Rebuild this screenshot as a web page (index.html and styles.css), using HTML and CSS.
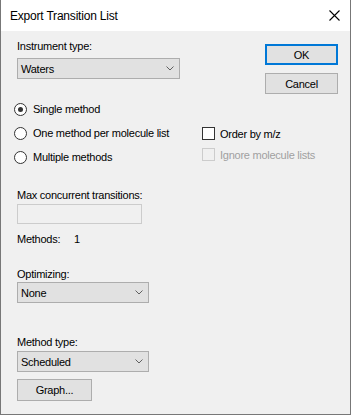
FILE: index.html
```html
<!DOCTYPE html>
<html lang="en">
<head>
    <meta charset="UTF-8">
    <meta name="viewport" content="width=device-width, initial-scale=1.0">
    <title>Export Transition List</title>
    <link rel="stylesheet" href="styles.css">
</head>
<body>
    <div class="window">
        <div class="titlebar">
            <span class="title">Export Transition List</span>
            <svg class="close" width="11" height="11" viewBox="0 0 11 11">
                <path d="M0.5 0.5 L10.5 10.5 M10.5 0.5 L0.5 10.5" stroke="#000" stroke-width="1.1" fill="none"/>
            </svg>
        </div>
        <div class="content">
            <div class="top-row">
                <div class="field">
                    <div class="label">Instrument type:</div>
                    <div class="combo combo-wide">
                        <span>Waters</span>
                        <svg class="chevron" width="8" height="5" viewBox="0 0 8 5"><path d="M0.5 0.5 L4 4 L7.5 0.5" stroke="#606060" fill="none"/></svg>
                    </div>
                </div>
                <div class="dialog-buttons">
                    <div class="button default">OK</div>
                    <div class="button">Cancel</div>
                </div>
            </div>

            <div class="choice-row">
                <div class="radio-list">
                    <div class="radio-item"><span class="radio checked"></span>Single method</div>
                    <div class="radio-item"><span class="radio"></span>One method per molecule list</div>
                    <div class="radio-item"><span class="radio"></span>Multiple methods</div>
                </div>
                <div class="check-list">
                    <div class="check-item"><span class="checkbox"></span>Order by m/z</div>
                    <div class="check-item disabled"><span class="checkbox"></span>Ignore molecule lists</div>
                </div>
            </div>

            <div class="label max-label">Max concurrent transitions:</div>
            <div class="textbox"></div>
            <div class="methods"><span class="methods-name">Methods:</span>1</div>

            <div class="label optimize-label">Optimizing:</div>
            <div class="combo combo-narrow">
                <span>None</span>
                <svg class="chevron" width="8" height="5" viewBox="0 0 8 5"><path d="M0.5 0.5 L4 4 L7.5 0.5" stroke="#606060" fill="none"/></svg>
            </div>

            <div class="label method-label">Method type:</div>
            <div class="combo combo-narrow">
                <span>Scheduled</span>
                <svg class="chevron" width="8" height="5" viewBox="0 0 8 5"><path d="M0.5 0.5 L4 4 L7.5 0.5" stroke="#606060" fill="none"/></svg>
            </div>
            <div class="button graph">Graph...</div>
        </div>
    </div>
</body>
</html>
```

FILE: styles.css
```css
body {
    margin: 0;
    font-family: "Liberation Sans", Arial, sans-serif;
    font-size: 11px;
    letter-spacing: -0.25px;
    color: #000;
    background: #f0f0f0;
}

.window {
    width: 351px;
    height: 415px;
    box-sizing: border-box;
    border: 1px solid #777;
    border-top: none;
    background: #f0f0f0;
    overflow: hidden;
}

.titlebar {
    height: 31px;
    background: #fff;
    display: flex;
    align-items: center;
    padding: 0 9px 0 9px;
}

.title {
    font-size: 12px;
    letter-spacing: -0.2px;
    flex: 1;
}

.close {
    margin-right: 1px;
}

.content {
    padding: 9px 12px 0 16px;
}

.label {
    line-height: 13px;
}

.top-row {
    display: flex;
}

.field {
    flex: 1;
}

.combo {
    margin-top: 5px;
    height: 21px;
    box-sizing: border-box;
    border: 1px solid #adadad;
    background: #e1e1e1;
    display: flex;
    align-items: center;
    justify-content: space-between;
    padding: 0 5px 0 3px;
}

.combo-wide {
    width: 163px;
}

.combo-narrow {
    width: 132px;
}

.dialog-buttons {
    margin-top: 4px;
    display: flex;
    flex-direction: column;
    gap: 8px;
}

.button {
    width: 73px;
    height: 21px;
    box-sizing: border-box;
    border: 1px solid #adadad;
    background: #e1e1e1;
    display: flex;
    align-items: center;
    justify-content: center;
}

.button.default {
    border: 2px solid #0078d7;
}

.choice-row {
    display: flex;
    margin-top: 3px;
    margin-left: -3px;
}

.radio-list {
    width: 188px;
}

.radio-item {
    height: 24px;
    display: flex;
    align-items: center;
}

.radio {
    width: 13px;
    height: 13px;
    box-sizing: border-box;
    border: 1px solid #333;
    border-radius: 50%;
    background: #fff;
    margin-right: 6px;
    display: flex;
    align-items: center;
    justify-content: center;
}

.radio.checked::after {
    content: "";
    width: 5px;
    height: 5px;
    border-radius: 50%;
    background: #333;
}

.check-list {
    margin-top: 26px;
}

.check-item {
    height: 21px;
    display: flex;
    align-items: center;
}

.checkbox {
    width: 13px;
    height: 13px;
    box-sizing: border-box;
    border: 1px solid #333;
    background: #fff;
    margin-right: 5px;
}

.check-item.disabled {
    color: #a0a0a0;
}

.check-item.disabled .checkbox {
    border-color: #ccc;
    background: #f0f0f0;
}

.max-label {
    margin-top: 20px;
}

.textbox {
    margin-top: 2px;
    width: 125px;
    height: 20px;
    box-sizing: border-box;
    border: 1px solid #ccc;
    background: #f0f0f0;
}

.methods {
    margin-top: 9px;
    line-height: 13px;
}

.methods-name {
    display: inline-block;
    width: 57px;
}

.optimize-label {
    margin-top: 22px;
}

.optimize-label + .combo {
    margin-top: 1px;
}

.method-label {
    margin-top: 33px;
}

.method-label + .combo {
    margin-top: 2px;
}

.graph {
    margin-top: 7px;
    width: 75px;
    height: 22px;
}
```
